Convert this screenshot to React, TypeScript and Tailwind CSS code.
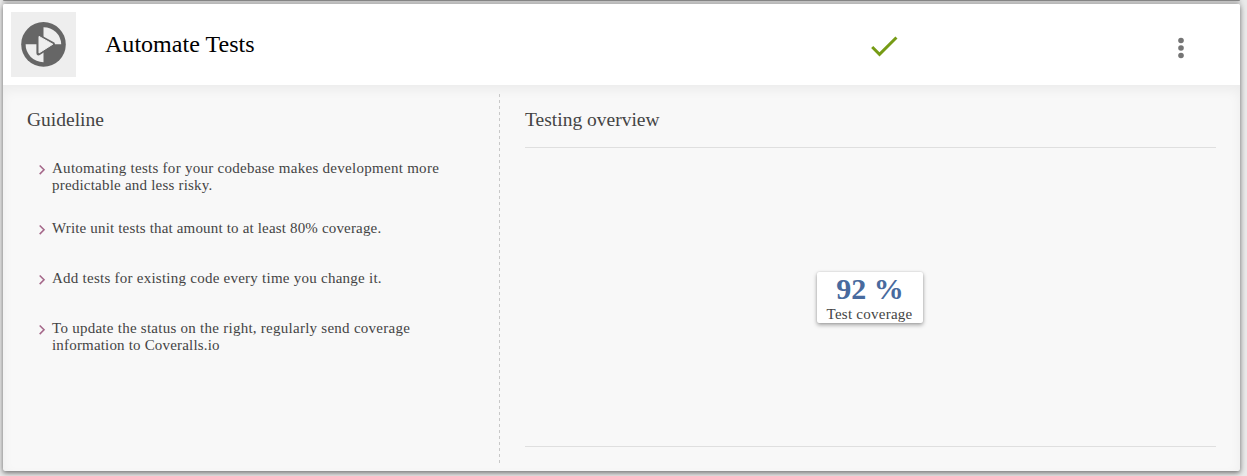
type Line = { text: string; tracking: string };

const guidelines: { lines: Line[]; gap: string }[] = [
  {
    lines: [
      { text: 'Automating tests for your codebase makes development more', tracking: 'tracking-[0.28px]' },
      { text: 'predictable and less risky.', tracking: 'tracking-[0.21px]' },
    ],
    gap: 'mb-[26px]',
  },
  {
    lines: [{ text: 'Write unit tests that amount to at least 80% coverage.', tracking: 'tracking-[0.17px]' }],
    gap: 'mb-[33px]',
  },
  {
    lines: [{ text: 'Add tests for existing code every time you change it.', tracking: 'tracking-[0.25px]' }],
    gap: 'mb-[33px]',
  },
  {
    lines: [
      { text: 'To update the status on the right, regularly send coverage', tracking: 'tracking-[0.26px]' },
      { text: 'information to Coveralls.io', tracking: 'tracking-[0.18px]' },
    ],
    gap: '',
  },
];

function Logo() {
  return (
    <div className="flex h-[65px] w-[65px] items-center justify-center bg-[#eeeeee]">
      <svg width="65" height="65" viewBox="0 0 65 65">
        <circle cx="32.5" cy="32.4" r="22.3" fill="#666666" />
        <path d="M32.5 15.2A17.6 17.6 0 0 1 50.2 32.2H32.5Z" fill="#eeeeee" />
        <path d="M32.5 50.2A17.8 17.8 0 0 1 14.6 32.2H32.5Z" fill="#eeeeee" />
        <path d="M27.6 24.4V41.2L41.8 32.2Z" fill="#666666" stroke="#666666" strokeWidth="4.4" strokeLinejoin="round" />
        <path d="M28 24.4V41L41.8 32.2Z" fill="#eeeeee" stroke="#eeeeee" strokeWidth="1" strokeLinejoin="round" />
      </svg>
    </div>
  );
}

export default function App() {
  return (
    <div className="h-[476px] w-full overflow-hidden bg-[#e9e9e9] pl-[3px] pr-[7px] font-['Liberation_Serif',serif]">
      <div className="h-px rounded-b-sm bg-[#888888] shadow-[0_1px_4px_rgba(0,0,0,0.7)]" />
      <div className="relative mt-[3px] flex h-[467px] flex-col rounded-[2px] bg-[#f8f8f8] shadow-[0_2px_5px_rgba(0,0,0,0.45),0_0_6px_rgba(0,0,0,0.15)]">
        <header className="flex h-[81px] shrink-0 items-center rounded-t-[2px] bg-white pl-2">
          <Logo />
          <h1 className="mb-[2px] ml-[29px] w-[761px] text-2xl leading-7 tracking-[0.03px] text-black">Automate Tests</h1>
          <svg className="mt-[3px]" width="36" height="36" viewBox="0 0 24 24" fill="#769b15">
            <path d="M9 16.17L4.83 12l-1.42 1.41L9 19 21 7l-1.41-1.41z" />
          </svg>
          <svg className="ml-[264px] mt-[6px]" width="30" height="30" viewBox="0 0 30 30" fill="#757575">
            <circle cx="15" cy="7.5" r="2.8" />
            <circle cx="15" cy="15" r="2.8" />
            <circle cx="15" cy="22.5" r="2.8" />
          </svg>
        </header>
        <main className="flex flex-1 text-[#444444] shadow-[inset_0_5px_12px_rgba(0,0,0,0.05)]">
          <section className="w-[496px] pl-6 pt-[23px]">
            <h2 className="text-[19.5px] leading-6">Guideline</h2>
            <ul className="mt-[28px] pl-[9px]">
              {guidelines.map((g) => (
                <li key={g.lines[0].text} className={`flex ${g.gap}`}>
                  <svg className="mt-[3px] shrink-0" width="16" height="14" viewBox="0 0 16 14" fill="none" stroke="#a5688a" strokeWidth="1.6">
                    <path d="M3.7 2.5L8 6.8L3.7 11.1" />
                  </svg>
                  <p className="whitespace-nowrap text-[15px] leading-[17px]">
                    {g.lines.map((line) => (
                      <span key={line.text} className={`block ${line.tracking}`}>{line.text}</span>
                    ))}
                  </p>
                </li>
              ))}
            </ul>
          </section>
          <div className="my-2 w-px bg-[repeating-linear-gradient(to_bottom,transparent_0_1px,#c8c8c8_1px_4px,transparent_4px_6px)]" />
          <section className="flex flex-1 flex-col pb-6 pl-[25px] pr-6 pt-[23px]">
            <h2 className="text-[19.5px] leading-6">Testing overview</h2>
            <div className="mt-[15px] flex flex-1 items-center justify-center border-y border-[#dfdfdf]">
              <div className="mr-[2px] mt-px flex h-[51px] w-[106px] flex-col items-center rounded-[2px] bg-white shadow-[0_2px_4px_rgba(0,0,0,0.35),0_0_2px_rgba(0,0,0,0.15)]">
                <strong className="ml-px text-[30px] leading-[34px] text-[#486a9e]">92 %</strong>
                <span className="text-[15px] leading-[17px] tracking-[0.25px]">Test coverage</span>
              </div>
            </div>
          </section>
        </main>
      </div>
    </div>
  );
}
